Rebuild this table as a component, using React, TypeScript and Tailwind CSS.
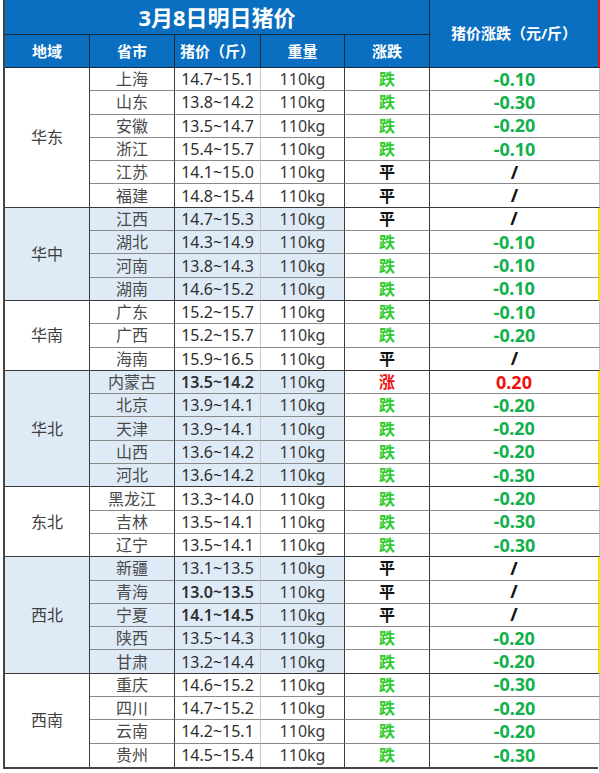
type Row = { p: string; price: string; dir: "跌" | "平" | "涨"; chg: string; bold?: boolean };
type Group = { region: string; shaded: boolean; rows: Row[] };

const groups: Group[] = [
  {
    region: "华东",
    shaded: false,
    rows: [
      { p: "上海", price: "14.7~15.1", dir: "跌", chg: "-0.10" },
      { p: "山东", price: "13.8~14.2", dir: "跌", chg: "-0.30" },
      { p: "安徽", price: "13.5~14.7", dir: "跌", chg: "-0.20" },
      { p: "浙江", price: "15.4~15.7", dir: "跌", chg: "-0.10" },
      { p: "江苏", price: "14.1~15.0", dir: "平", chg: "/" },
      { p: "福建", price: "14.8~15.4", dir: "平", chg: "/" },
    ],
  },
  {
    region: "华中",
    shaded: true,
    rows: [
      { p: "江西", price: "14.7~15.3", dir: "平", chg: "/" },
      { p: "湖北", price: "14.3~14.9", dir: "跌", chg: "-0.10" },
      { p: "河南", price: "13.8~14.3", dir: "跌", chg: "-0.10" },
      { p: "湖南", price: "14.6~15.2", dir: "跌", chg: "-0.10" },
    ],
  },
  {
    region: "华南",
    shaded: false,
    rows: [
      { p: "广东", price: "15.2~15.7", dir: "跌", chg: "-0.10" },
      { p: "广西", price: "15.2~15.7", dir: "跌", chg: "-0.20" },
      { p: "海南", price: "15.9~16.5", dir: "平", chg: "/" },
    ],
  },
  {
    region: "华北",
    shaded: true,
    rows: [
      { p: "内蒙古", price: "13.5~14.2", dir: "涨", chg: "0.20", bold: true },
      { p: "北京", price: "13.9~14.1", dir: "跌", chg: "-0.20" },
      { p: "天津", price: "13.9~14.1", dir: "跌", chg: "-0.20" },
      { p: "山西", price: "13.6~14.2", dir: "跌", chg: "-0.20" },
      { p: "河北", price: "13.6~14.2", dir: "跌", chg: "-0.30" },
    ],
  },
  {
    region: "东北",
    shaded: false,
    rows: [
      { p: "黑龙江", price: "13.3~14.0", dir: "跌", chg: "-0.20" },
      { p: "吉林", price: "13.5~14.1", dir: "跌", chg: "-0.30" },
      { p: "辽宁", price: "13.5~14.1", dir: "跌", chg: "-0.30" },
    ],
  },
  {
    region: "西北",
    shaded: true,
    rows: [
      { p: "新疆", price: "13.1~13.5", dir: "平", chg: "/" },
      { p: "青海", price: "13.0~13.5", dir: "平", chg: "/", bold: true },
      { p: "宁夏", price: "14.1~14.5", dir: "平", chg: "/", bold: true },
      { p: "陕西", price: "13.5~14.3", dir: "跌", chg: "-0.20" },
      { p: "甘肃", price: "13.2~14.4", dir: "跌", chg: "-0.20" },
    ],
  },
  {
    region: "西南",
    shaded: false,
    rows: [
      { p: "重庆", price: "14.6~15.2", dir: "跌", chg: "-0.30" },
      { p: "四川", price: "14.7~15.2", dir: "跌", chg: "-0.20" },
      { p: "云南", price: "14.2~15.1", dir: "跌", chg: "-0.20" },
      { p: "贵州", price: "14.5~15.4", dir: "跌", chg: "-0.30" },
    ],
  },
];

const dirColor = { 跌: "text-[#2fcb2f]", 平: "text-[#111]", 涨: "text-[#f01010]" };
const chgColor = { 跌: "text-[#12b04c]", 平: "text-[#111]", 涨: "text-[#f01010]" };

export default function App() {
  return (
    <div
      className="w-[600px] h-[773px] bg-white border-r border-[#d4d4d4] pl-[3px]"
      style={{ fontFamily: '"Noto Sans", "Noto Sans CJK SC", sans-serif' }}
    >
      <div className="grid w-[595px] grid-cols-[85px_85px_86px_84px_85px_170px] grid-rows-[35px_33px] auto-rows-[23.3px] border-l-2 border-[#444] border-b-2 border-b-[#444]">
        {/* Title */}
        <div className="col-span-5 flex items-center justify-center bg-[#0a6fc1] border-b border-r border-[#1b2a3a] text-white text-[22px] font-bold leading-none">
          3月8日明日猪价
        </div>
        <div className="row-span-2 flex items-center justify-center bg-[#0a6fc1] border-b border-[#1b2a3a] border-r-2 border-r-[#e8141a] text-white text-[15px] font-bold">
          猪价涨跌（元/斤）
        </div>

        {/* Header row */}
        {["地域", "省市", "猪价（斤）", "重量", "涨跌"].map((h) => (
          <div
            key={h}
            className="flex items-center justify-center bg-[#0a6fc1] border-b border-r border-[#1b2a3a] text-white text-[15px] font-bold"
          >
            {h}
          </div>
        ))}

        {groups.map((g, gi) => {
          const shade = g.shaded ? "bg-[#deebf7]" : "bg-white";
          const last = gi === groups.length - 1;
          return [
            <div
              key={g.region}
              style={{ gridRow: `span ${g.rows.length}` }}
              className={`flex items-center justify-center ${shade} border-r border-[#3a3a3a] ${last ? "" : "border-b border-b-[#3a3a3a]"} text-[16px] text-[#3f3f3f]`}
            >
              {g.region}
            </div>,
            ...g.rows.flatMap((r, ri) => {
              const endRow = ri === g.rows.length - 1;
              const bb = endRow ? (last ? "" : "border-b border-b-[#3a3a3a]") : "border-b border-b-[#8a8a8a]";
              const rightEdge = g.shaded ? "border-r-2 border-r-[#f5e400]" : "border-r border-r-[#c4c4c4]";
              return [
                <div key={r.p + "p"} className={`flex items-center justify-center ${shade} ${bb} border-r border-r-[#3a3a3a] text-[16px] text-[#4a4a4a]`}>
                  {r.p}
                </div>,
                <div key={r.p + "pr"} className={`flex items-center justify-center ${shade} ${bb} border-r border-r-[#c8c8c8] text-[16px] text-[#2e2e2e] ${r.bold ? "font-semibold" : ""}`}>
                  {r.price}
                </div>,
                <div key={r.p + "w"} className={`flex items-center justify-center ${shade} ${bb} border-r border-r-[#3a3a3a] text-[16px] text-[#3a3a3a]`}>
                  110kg
                </div>,
                <div key={r.p + "d"} className={`flex items-center justify-center bg-white ${bb} border-r border-r-[#3a3a3a] text-[16px] font-bold ${dirColor[r.dir]}`}>
                  {r.dir}
                </div>,
                <div key={r.p + "c"} className={`flex items-center justify-center bg-white ${bb} ${rightEdge} text-[18px] font-bold ${chgColor[r.dir]}`}>
                  {r.chg}
                </div>,
              ];
            }),
          ];
        })}
      </div>
    </div>
  );
}
